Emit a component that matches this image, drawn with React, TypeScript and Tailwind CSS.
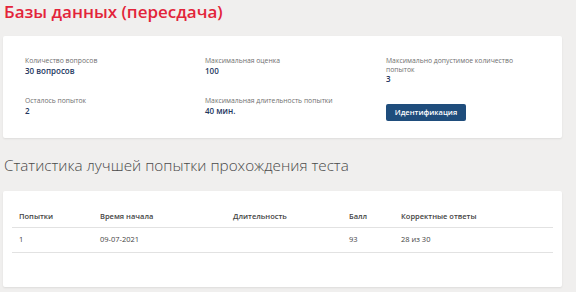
const INFO = [
  { label: "Количество вопросов", value: "30 вопросов" },
  { label: "Максимальная оценка", value: "100" },
  { label: "Максимально допустимое количество попыток", value: "3" },
  { label: "Осталось попыток", value: "2" },
  { label: "Максимальная длительность попытки", value: "40 мин." },
];

const COLUMNS = ["Попытки", "Время начала", "Длительность", "Балл", "Корректные ответы"];
const ROWS = [["1", "09-07-2021", "", "93", "28 из 30"]];

function InfoItem({ label, value }: { label: string; value: string }) {
  return (
    <div>
      <div className="text-[6.8px] leading-[8.5px] text-[#6f6f6f]">{label}</div>
      <div className="text-[8px] font-semibold leading-[9px] text-[#22365e]">{value}</div>
    </div>
  );
}

export default function App() {
  return (
    <div
      className="min-h-[292px] bg-[#f0efee] px-[3px] pb-[6px] pr-[14px]"
      style={{ fontFamily: '"Open Sans", "Liberation Sans", sans-serif' }}
    >
      <h1 className="pl-[1px] text-[17px] font-semibold leading-[24px] text-[#e3243a]">
        Базы данных (пересдача)
      </h1>

      <div className="mt-[12px] h-[102px] rounded-[2px] bg-white pl-[22px] pt-[21px] shadow-[0_1px_2px_rgba(0,0,0,0.08)]">
        <div className="grid grid-cols-[180px_181px_1fr] gap-y-[14px]">
          <InfoItem {...INFO[0]} />
          <InfoItem {...INFO[1]} />
          <div className="w-[135px]">
            <InfoItem {...INFO[2]} />
          </div>
          <InfoItem {...INFO[3]} />
          <InfoItem {...INFO[4]} />
          <div>
            <button
              type="button"
              className="h-[17px] w-[80px] rounded-[2px] bg-[#1f4d7c] text-[7.5px] font-semibold text-white"
            >
              Идентификация
            </button>
          </div>
        </div>
      </div>

      <h2 className="mt-[16px] pl-[1px] text-[15.25px] font-light leading-[22px] text-[#4a4a4a]">
        Статистика лучшей попытки прохождения теста
      </h2>

      <div className="mt-[15px] rounded-[2px] bg-white px-[9px] pb-[34px] pt-[16px] shadow-[0_1px_2px_rgba(0,0,0,0.08)]">
        <table className="w-full border-collapse text-left text-[7.5px] text-[#444]">
          <colgroup>
            <col className="w-[81px]" />
            <col className="w-[133px]" />
            <col className="w-[116px]" />
            <col className="w-[52px]" />
            <col />
          </colgroup>
          <thead>
            <tr className="h-[20px] border-b border-[#e2e2e2]">
              {COLUMNS.map((c) => (
                <th key={c} className="pl-[7px] font-semibold">
                  {c}
                </th>
              ))}
            </tr>
          </thead>
          <tbody>
            {ROWS.map((row, i) => (
              <tr key={i} className="h-[25px] border-b border-[#e2e2e2]">
                {row.map((cell, j) => (
                  <td key={j} className="pl-[7px]">
                    {cell}
                  </td>
                ))}
              </tr>
            ))}
          </tbody>
        </table>
      </div>
    </div>
  );
}
